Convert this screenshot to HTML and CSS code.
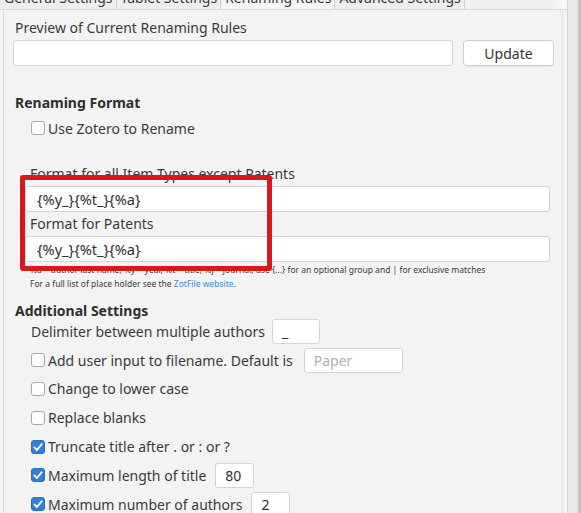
FILE: index.html
```html
<!DOCTYPE html>
<html>
<head>
<meta charset="utf-8">
<link rel="stylesheet" href="styles.css">
</head>
<body>
<div class="window">
  <div class="main">
    <div class="tabs">
      <div class="tab">General Settings</div>
      <div class="tab">Tablet Settings</div>
      <div class="tab active">Renaming Rules</div>
      <div class="tab">Advanced Settings</div>
      <div class="tab-fill"></div>
    </div>
    <div class="panel">
      <div class="label">Preview of Current Renaming Rules</div>
      <div class="preview-row">
        <div class="field preview-field"></div>
        <button class="btn">Update</button>
      </div>

      <div class="header h-renaming">Renaming Format</div>
      <div class="check-row use-zotero">
        <span class="cb"></span><span>Use Zotero to Rename</span>
      </div>

      <div class="format-block">
        <div class="sub-label first">Format for all Item Types except Patents</div>
        <div class="field format-field">{%y_}{%t_}{%a}</div>
        <div class="sub-label">Format for Patents</div>
        <div class="field format-field">{%y_}{%t_}{%a}</div>
        <div class="hint hint-first">%a = author last name, %y = year, %t = title, %j = journal, use {...} for an optional group and | for exclusive matches</div>
        <div class="hint">For a full list of place holder see the <span class="link">ZotFile website</span>.</div>
        <div class="annot"></div>
      </div>

      <div class="header h-additional">Additional Settings</div>
      <div class="rows">
        <div class="row plain">
          <span>Delimiter between multiple authors</span>
          <div class="field small-field delim">_</div>
        </div>
        <div class="row check-row">
          <span class="cb"></span><span>Add user input to filename. Default is</span>
          <div class="field small-field paper"><span class="ph">Paper</span></div>
        </div>
        <div class="row check-row">
          <span class="cb"></span><span>Change to lower case</span>
        </div>
        <div class="row check-row">
          <span class="cb"></span><span>Replace blanks</span>
        </div>
        <div class="row check-row">
          <span class="cb checked"><svg viewBox="0 0 14 14" width="14" height="14"><path d="M3.3 7.4 L5.9 10 L10.8 4.2" fill="none" stroke="#fff" stroke-width="1.8" stroke-linecap="round" stroke-linejoin="round"/></svg></span><span>Truncate title after . or : or ?</span>
        </div>
        <div class="row check-row">
          <span class="cb checked"><svg viewBox="0 0 14 14" width="14" height="14"><path d="M3.3 7.4 L5.9 10 L10.8 4.2" fill="none" stroke="#fff" stroke-width="1.8" stroke-linecap="round" stroke-linejoin="round"/></svg></span><span>Maximum length of title</span>
          <div class="field small-field num">80</div>
        </div>
        <div class="row check-row">
          <span class="cb checked"><svg viewBox="0 0 14 14" width="14" height="14"><path d="M3.3 7.4 L5.9 10 L10.8 4.2" fill="none" stroke="#fff" stroke-width="1.8" stroke-linecap="round" stroke-linejoin="round"/></svg></span><span>Maximum number of authors</span>
          <div class="field small-field num">2</div>
        </div>
      </div>
    </div>
  </div>
  <div class="side"></div>
</div>
</body>
</html>
```

FILE: styles.css
```css
* { box-sizing: border-box; }
html, body { margin: 0; padding: 0; }
body {
  width: 581px;
  height: 513px;
  overflow: hidden;
  background: #f3f3f3;
  font-family: "Noto Sans", "Open Sans", sans-serif;
  font-size: 14px;
  color: #3a3a3a;
}
.window {
  display: flex;
  height: 513px;
}
.main {
  width: 568px;
  border-right: 1px solid #d6d6d6;
}
.side {
  flex: 1;
  background: linear-gradient(to right, #e8e8e8 0, #e8e8e8 9px, #cfcfcf 10px, #b9b9b9 13px);
}
.tabs {
  display: flex;
  margin-top: -12px;
  height: 22px;
  border-bottom: 1px solid #d9d9d9;
}
.tab {
  padding: 0 3px 0 4px;
  line-height: 20px;
  border-right: 1px solid #cfcfcf;
  background: #eeeeee;
  white-space: nowrap;
}
.tab.active {
  background: #f5f5f5;
}
.tab-fill {
  flex: 1;
  background: linear-gradient(to right, #f0f0f0 0, #f0f0f0 85%, #fafafa 100%);
}
.panel {
  margin-left: 3px;
  border-left: 1px solid #dcdcdc;
  border-right: 1px solid #e4e4e4;
  margin-right: 4px;
  height: 503px;
  padding: 9px 0 0 9px;
}
.label {
  line-height: 18px;
  padding-left: 2px;
}
.preview-row {
  display: flex;
  margin-top: 3px;
  gap: 10px;
}
.field {
  background: #fff;
  border: 1px solid #d4d4d4;
  border-radius: 3px;
  height: 26px;
  line-height: 24px;
  padding-left: 9px;
  color: #2c2c2c;
}
.preview-field {
  width: 440px;
}
.btn {
  width: 91px;
  height: 26px;
  font-family: inherit;
  font-size: 14px;
  color: #333;
  background: #fff;
  border: 1px solid #cfcfcf;
  border-radius: 4px;
  box-shadow: 0 1px 1px rgba(0,0,0,0.06);
  padding: 0;
}
.header {
  font-weight: bold;
  color: #2f2f2f;
  padding-left: 2px;
}
.h-renaming {
  margin-top: 28px;
  line-height: 18px;
}
.check-row {
  display: flex;
  align-items: center;
}
.use-zotero {
  margin-top: 6px;
  height: 20px;
  padding-left: 18px;
}
.cb {
  width: 14px;
  height: 14px;
  border: 1px solid #a8a8a8;
  border-radius: 3px;
  background: #fff;
  margin-right: 3px;
  flex: none;
  display: flex;
}
.cb.checked {
  background: #2f7fd6;
  border-color: #2a6fbd;
}
.cb svg { margin: -1px; }
.format-block {
  position: relative;
  padding-left: 12px;
  padding-top: 27px;
}
.sub-label {
  line-height: 18px;
  padding-left: 5px;
  margin-top: 3px;
}
.sub-label.first {
  margin-top: 0;
}
.format-field {
  margin-top: 3px;
  width: 525px;
  padding-left: 11px;
  font-size: 14.6px;
}
.hint {
  font-size: 8.5px;
  line-height: 14px;
  padding-left: 5px;
  color: #3a3a3a;
  white-space: nowrap;
}
.hint-first { margin-top: 1px; }
.link { color: #4a86c8; }
.annot {
  position: absolute;
  left: 7px;
  top: 37px;
  width: 252px;
  height: 96px;
  border: 5px solid #d8191b;
  border-radius: 3px;
}
.h-additional {
  margin-top: 12px;
  line-height: 16px;
}
.rows {
  display: flex;
  flex-direction: column;
  padding-left: 18px;
  margin-top: -2px;
}
.row {
  height: 28.8px;
  display: flex;
  align-items: center;
}
.small-field {
  height: 25px;
  line-height: 23px;
}
.delim { width: 48px; margin-left: 7px; }
.paper { width: 99px; margin-left: 11px; }
.ph { color: #b0b0b0; }
.num { width: 39px; margin-left: 9px; }
```
